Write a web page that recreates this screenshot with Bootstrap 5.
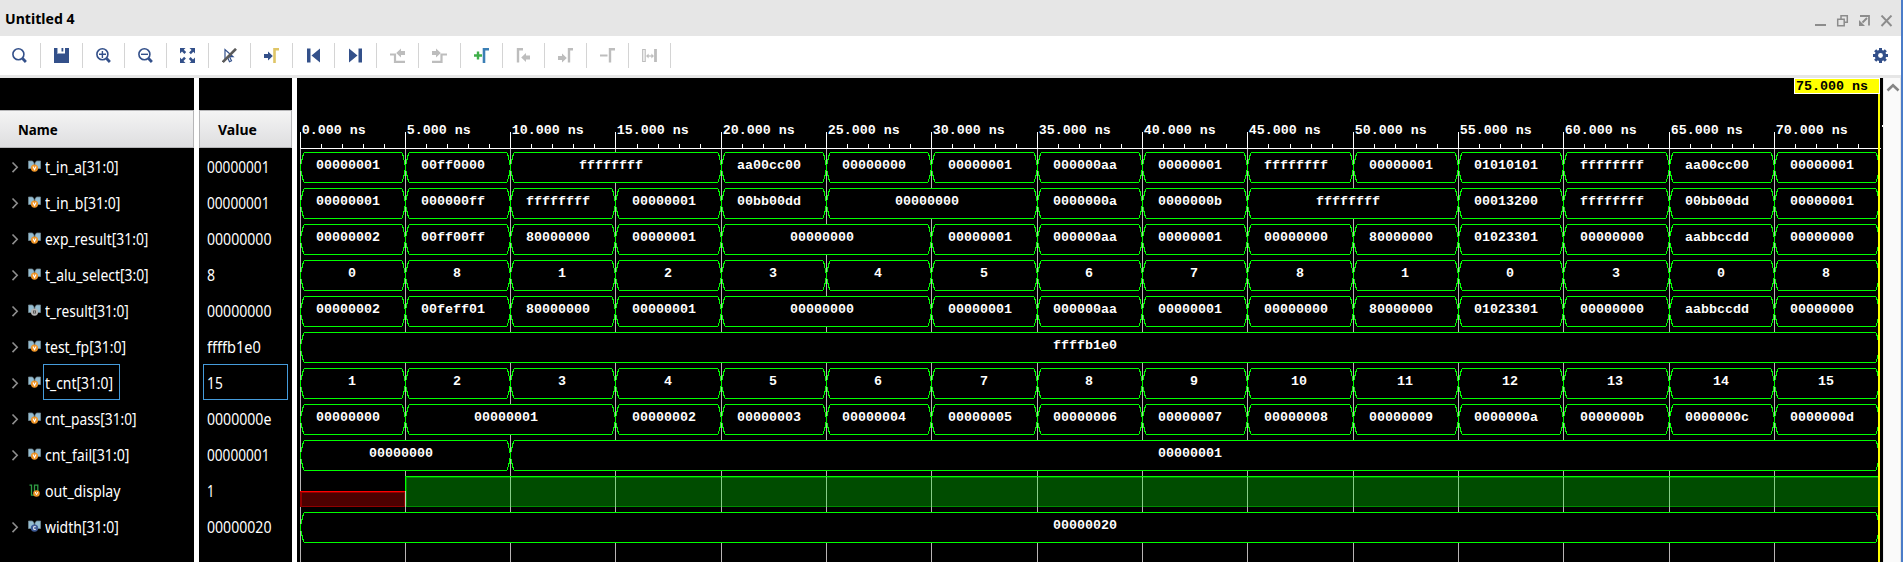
<!DOCTYPE html>
<html lang="en">
<head>
<meta charset="utf-8">
<title>Untitled 4</title>
<link href="https://cdn.jsdelivr.net/npm/bootstrap@5.3.0/dist/css/bootstrap.min.css" rel="stylesheet">
<style>
body{height:562px;overflow:hidden;background:#fff;font-family:"Noto Sans",sans-serif;color:#000;border-right:2px solid #4a7cc8}
svg{display:block;flex:none}
.fit{display:inline-block;white-space:pre;transform-origin:0 50%}
.titlebar{height:36px;background:#e6e6e6;padding:0 8px 0 5px}
.titlebar .fit{font-size:14.5px;font-weight:700;line-height:20px;margin-top:8px}
.titlebar svg{margin-top:15px}
.toolstrip{height:42px;border-bottom:3px solid #e6e6e6;padding-right:13px}
.tools{margin-left:-1px}
.tool{width:42px;height:25px;border-right:1px solid #d4d4d4}
.pane{background:#000;color:#fff;padding-top:32px;font-size:15.5px}
.names{width:194px}
.vals{width:93px}
.split{width:5px;background:#fff}
.hd{height:38px;border:1px solid #b6b6b8;border-width:1px 1px 1px 0;background:linear-gradient(#f4f4f4,#dedee0);color:#000;font-size:14px;font-weight:700;line-height:37px}
.vals .hd{border-left-width:1px}
.sig{height:36px}
.lbl{height:36px;border:1px solid transparent;padding-left:.5px;line-height:36px}
.lbl.sel{border-color:#459bdb}
.names .lbl{margin-left:2px}
.names .lbl.sel{width:77px}
.vals .lbl{margin-left:4px;width:85px;padding-left:2.5px}
.wave{background:#000}
.wave text{font:bold 13.33px "Liberation Mono",monospace;fill:#fff;white-space:pre}
.scroller{background:#fafafa;border-left:1px solid #ececec;border-right:1px solid #e4e4e4}
</style>
<script src="https://cdn.jsdelivr.net/npm/bootstrap@5.3.0/dist/js/bootstrap.bundle.min.js"></script>
</head>
<body class="d-flex flex-column">
<header class="titlebar d-flex align-items-start justify-content-between">
  <span class="fit" data-w="70">Untitled 4</span>
  <svg width="78" height="12" viewBox="0 0 78 12" fill="none" stroke="#8c8c8c" stroke-width="1.5">
    <path d="M0 10h11" stroke-width="2"/>
    <path d="M22.7 4.2h6.5v6.5h-6.5zM26 4V.8h6.3v6.5h-3"/>
    <path d="M45 1h9v9.5" stroke-width="1.8"/><path d="M52 3l-4.5 4.5" stroke-width="2"/><path d="M44 5v6h6z" fill="#8c8c8c" stroke="none"/>
    <path d="M66.500 .5l10 10.500M76.500 .5l-10 10.500" stroke-width="1.900"/>
  </svg>
</header>
<div class="toolstrip d-flex align-items-center justify-content-between">
  <div class="tools d-flex" id="tools"></div>
  <svg width="15" height="15" viewBox="0 0 15 15"><g fill="#33508a"><path d="M6 0h3v15H6z"/><path d="M6 0h3v15H6z" transform="rotate(45 7.500 7.500)"/><path d="M6 0h3v15H6z" transform="rotate(90 7.500 7.500)"/><path d="M6 0h3v15H6z" transform="rotate(135 7.500 7.500)"/><circle cx="7.500" cy="7.500" r="5.700"/></g><circle cx="7.500" cy="7.500" r="2.400" fill="#fff"/></svg>
</div>
<main class="d-flex flex-grow-1">
  <section class="pane names"><div class="hd"><span class="fit" data-w="40" style="margin-left:18px">Name</span></div><div id="names"></div></section>
  <div class="split"></div>
  <section class="pane vals"><div class="hd"><span class="fit" data-w="39" style="margin-left:18px">Value</span></div><div id="vals"></div></section>
  <div class="split"></div>
  <svg class="wave" id="wave" width="1586" height="484" viewBox="297 78 1586 484"></svg>
  <div class="scroller flex-grow-1"><svg width="16" height="20" viewBox="0 0 16 20" fill="none" stroke="#858585" stroke-width="2.600"><path d="M3.500 12.500L9 7.300l5.500 5.200"/></svg></div>
</main>
<script>
const B='#33508a', G='#bdbdbd';
const lens='<circle cx="6.400" cy="6.300" r="5.500" fill="none" stroke="#33508a" stroke-width="1.600"/><path d="M10.600 10.600l3.300 3.300" stroke="#33508a" stroke-width="2.800"/>';
const arrowR=(x,y,c)=>`<path fill="${c}" d="M${x} ${y-2}h4v-2.500l4.800 4.500l-4.800 4.500v-2.500h-4z"/>`;
const arrowL=(x,y,c)=>`<path fill="${c}" d="M${x+8.800} ${y-2}h-4v-2.500l-4.800 4.500l4.800 4.500v-2.500h4z"/>`;
const line=(d,c,w=2)=>`<path fill="none" stroke="${c}" stroke-width="${w}" d="${d}"/>`;
const corner=`<path d="M0 0h5.500l-1.700 1.700 2.400 2.400-1.800 1.800L2 3.500 0 5.500z"/>`;
const icons=[
 lens,
 `<path fill="${B}" d="M0 0h3v5.500h8V0h4v15H0z"/><path fill="${B}" d="M7.500 0h1.800v3.500H7.500z"/><path fill="#9fb0cc" d="M3 0h1v5h-1z"/>`,
 lens+line('M3 6.300h7M6.400 3v7',B,1.4),
 lens+line('M3 6.300h7',B,1.4),
 `<g fill="${B}">${[0,90,180,270].map(a=>`<g transform="rotate(${a} 7.500 7.500)">${corner}</g>`).join('')}</g>`,
 line('M3 1.500v10l2.500-2.300 2 4.500 2-1-2-4h3.500z',B,1.2)+line('M.8 14L14 .8','#5a5a5a',2.6),
 arrowR(0,8,B)+line('M10.500 15V1.200H15','#dfc566',2.6),
 `<path fill="${B}" d="M1 .5h3.500v14H1zM14 .5v14L5.500 7.500z"/>`,
 `<path fill="${B}" d="M10.500 .5H14v14h-3.500zM1 .5v14l8.500-7z"/>`,
 line('M0 6.500h5v7.300h10',G,2.2)+arrowL(6.2,5,G),
 line('M0 13.800h9.500v-7.300H15',G,2.2)+arrowR(0,5,G),
 line('M0 7.500h8M4 3.500v8','#3fae49',2.4)+line('M10 15V1.200h5','#3b7fb5',2.6),
 line('M2 14.500V1.200h5',G,2.4)+arrowL(5.2,9.5,G),
 arrowR(0,10,G)+line('M11 14.500V1.200h4.500',G,2.4),
 line('M0 7.500h7.500',G,2)+line('M10 14.500V1.200h5',G,2.4),
 line('M.7 1.500h2.500v12H.7z',G,1.2)+line('M13.500 1v13',G,2.8)+line('M5 8h6',G,1.2)+`<path fill="${G}" d="M4 8l2.600-2.600v5.200zM12 8l-2.600-2.600v5.200z"/>`
];
document.getElementById('tools').innerHTML=icons.map(i=>`<div class="tool d-flex align-items-center justify-content-center"><svg width="15" height="15" viewBox="0 0 15 15">${i}</svg></div>`).join('');

const sq=`<path fill="#94bdd2" stroke="#6e8791" stroke-width=".8" d="M.5 .5h4l1.500 2v5.500H.5zM12.500 .5h-4L7 2.500V8h5.500z"/>`;
const kinds={
 v:sq+'<circle cx="6.500" cy="7.600" r="3.600" fill="#ee9426"/><path d="M5 6l1.500 3L8 6" fill="none" stroke="#fff" stroke-width="1.100"/>',
 r:sq+'<circle cx="6.500" cy="7.600" r="3.600" fill="#b4b4b4"/><path d="M5 6h3v3H5z" fill="#555"/><path d="M6 7h1v1H6z" fill="#ddd"/>',
 c:sq+'<circle cx="6.500" cy="7.600" r="3.700" fill="#3f5b96"/><path d="M7.800 6.200H5.700v2.700h2.100" fill="none" stroke="#fff" stroke-width=".9"/>',
 s:'<path d="M1.500 .7h2v10h3V.7h3.300v7" fill="none" stroke="#2f9e44" stroke-width="1.300"/><circle cx="8.500" cy="9" r="3.300" fill="#ee9426"/><path d="M7.200 7.500l1.300 2.700 1.300-2.700" fill="none" stroke="#fff"/>'
};
const R='00000000';
const sigs=[
 ['t_in_a[31:0]',74,'v','00000001',62.5,[['00000001',1],['00ff0000',1],['ffffffff',2],['aa00cc00',1],[R,1],['00000001',1],['000000aa',1],['00000001',1],['ffffffff',1],['00000001',1],['01010101',1],['ffffffff',1],['aa00cc00',1],['00000001',1]]],
 ['t_in_b[31:0]',75,'v','00000001',62.5,[['00000001',1],['000000ff',1],['ffffffff',1],['00000001',1],['00bb00dd',1],[R,2],['0000000a',1],['0000000b',1],['ffffffff',2],['00013200',1],['ffffffff',1],['00bb00dd',1],['00000001',1]]],
 ['exp_result[31:0]',103,'v',R,64.5,[['00000002',1],['00ff00ff',1],['80000000',1],['00000001',1],[R,2],['00000001',1],['000000aa',1],['00000001',1],[R,1],['80000000',1],['01023301',1],[R,1],['aabbccdd',1],[R,1]]],
 ['t_alu_select[3:0]',104,'v','8',8.2,'081234567810308'.split('').map(c=>[c,1])],
 ['t_result[31:0]',84,'r',R,64.5,[['00000002',1],['00feff01',1],['80000000',1],['00000001',1],[R,2],['00000001',1],['000000aa',1],['00000001',1],[R,1],['80000000',1],['01023301',1],[R,1],['aabbccdd',1],[R,1]]],
 ['test_fp[31:0]',81,'v','ffffb1e0',53.5,[['ffffb1e0',15]]],
 ['t_cnt[31:0]',68,'v','15',16,[...Array(15)].map((_,i)=>[''+(i+1),1])],
 ['cnt_pass[31:0]',92,'v','0000000e',64.5,[[R,1],['00000001',2],...'23456789abcd'.split('').map(c=>['0000000'+c,1])]],
 ['cnt_fail[31:0]',84,'v','00000001',62.5,[[R,2],['00000001',13]]],
 ['out_display',76,'s','1',7.5,null],
 ['width[31:0]',74,'c','00000020',64.5,[['00000020',15]]]
];
document.getElementById('names').innerHTML=sigs.map((s,i)=>`<div class="sig d-flex"><svg width="41" height="36" viewBox="0 0 41 36">${s[2]=='s'?'':'<path d="M12.500 14.500l4.700 4.800-4.700 4.800" fill="none" stroke="#8e8e8e" stroke-width="1.600"/>'}<g transform="translate(28 12.500)">${kinds[s[2]]}</g></svg><div class="lbl ${i==6?'sel':''}"><span class="fit" data-w="${s[1]}">${s[0]}</span></div></div>`).join('');
document.getElementById('vals').innerHTML=sigs.map((s,i)=>`<div class="sig"><div class="lbl ${i==6?'sel':''}"><span class="fit" data-w="${s[4]}">${s[3]}</span></div></div>`).join('');

/* time axis: 105.32 px for each 5 ns */
const X=i=>Math.floor(300+105.32*i);
let w='';
const rect=(x,y,a,b,c)=>`<rect x="${x}" y="${y}" width="${a}" height="${b}" fill="${c}"/>`;
for(let i=0;i<15;i++){
  w+=rect(X(i),149,1,413,'#b8b4b4')+rect(X(i),132,1,16,'#fff');
  for(let k=1;k<5;k++) w+=rect(Math.floor(300+105.32*(i+k/5)),144,1,4,'#fff');
  w+=`<text x="${X(i)+1.8}" y="134">${i*5}.000 ns</text>`;
}
w+=rect(300,148,1581,1,'#fff')+rect(1882,125,1,2,'#fff');
sigs.forEach((s,r)=>{
  const t=152+36*r;
  if(!s[5]){
    w+=rect(300,t+15,106,16,'#900000')+rect(302,t+17,102,13,'#4c0000')+rect(300,t+15,106,1,'#f00');
    w+=rect(405,t,1475,31,'#008a00')+rect(407,t+2,1473,28,'#004c00');
    for(let i=2;i<15;i++) w+=rect(X(i),t+1,1,30,'#86cc86');
    w+=rect(405,t,1475,1,'#0f0')+rect(405,t+1,1,14,'#0f0')+rect(405,t+15,1,16,'#b8dcb8');
    return;
  }
  let i=0;
  for(const [v,n] of s[5]){
    const a=X(i)+.5,b=X(i+n)+.5; i+=n;
    w+=`<path d="M${a} ${t+15.5}l1 -6l1 -4l1 -4l1 -1H${b-4}l1 1l1 4l1 4l1 6l-1 6l-1 4l-1 4l-1 1H${a+4}l-1 -1l-1 -4l-1 -4z" fill="#000" stroke="#0f0" shape-rendering="crispEdges"/>`;
    w+=`<text x="${Math.round((a+b)/2-4.57*v.length-.3)}" y="${t+17}">${v}</text>`;
  }
});
w+=rect(1878,78,2,484,'#ff0')+rect(1794,78,86,16,'#fff')+rect(1795,79,84,14,'#ff0')+'<text x="1796" y="90" style="fill:#000">75.000 ns</text>';
document.getElementById('wave').innerHTML=w;

document.querySelectorAll('.fit').forEach(e=>{e.style.transform=`scaleX(${e.dataset.w/e.offsetWidth})`});
</script>
</body>
</html>
